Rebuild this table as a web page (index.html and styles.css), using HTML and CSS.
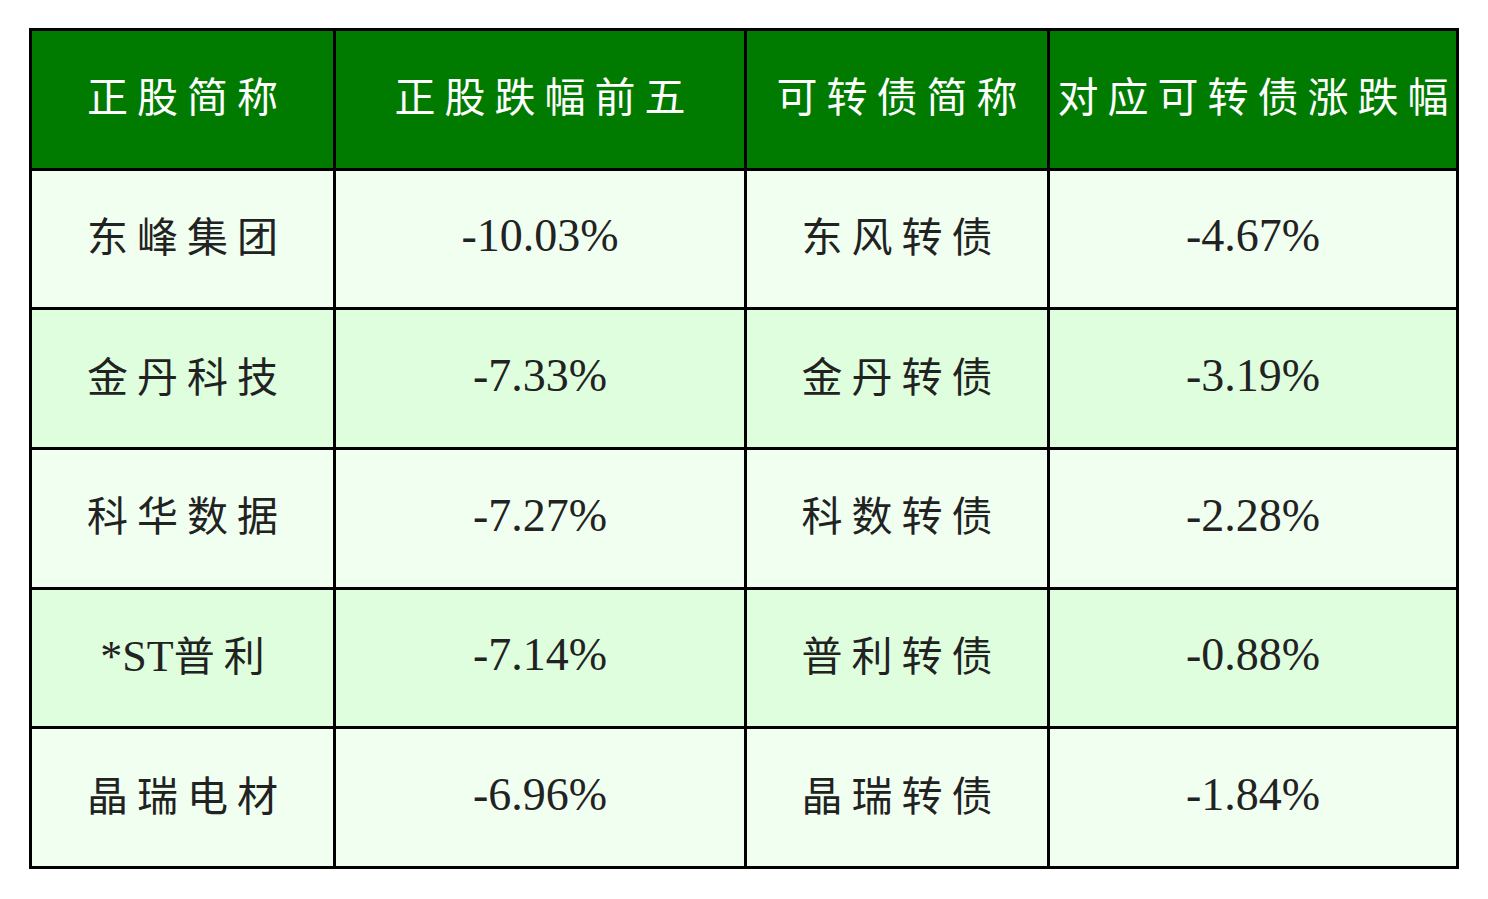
FILE: index.html
```html
<!DOCTYPE html>
<html lang="zh-CN">
<head>
<meta charset="utf-8">
<title>正股跌幅前五</title>
<link rel="stylesheet" href="styles.css">
</head>
<body>
<div class="table">
  <div class="cell head"><span class="txt">正股简称</span></div>
  <div class="cell head"><span class="txt">正股跌幅前五</span></div>
  <div class="cell head"><span class="txt">可转债简称</span></div>
  <div class="cell head"><span class="txt">对应可转债涨跌幅</span></div>

  <div class="cell odd cjk"><span class="txt">东峰集团</span></div>
  <div class="cell odd num">-10.03%</div>
  <div class="cell odd cjk"><span class="txt">东风转债</span></div>
  <div class="cell odd num">-4.67%</div>

  <div class="cell even cjk"><span class="txt">金丹科技</span></div>
  <div class="cell even num">-7.33%</div>
  <div class="cell even cjk"><span class="txt">金丹转债</span></div>
  <div class="cell even num">-3.19%</div>

  <div class="cell odd cjk"><span class="txt">科华数据</span></div>
  <div class="cell odd num">-7.27%</div>
  <div class="cell odd cjk"><span class="txt">科数转债</span></div>
  <div class="cell odd num">-2.28%</div>

  <div class="cell even cjk"><span class="txt"><span class="lat">*ST</span>普利</span></div>
  <div class="cell even num">-7.14%</div>
  <div class="cell even cjk"><span class="txt">普利转债</span></div>
  <div class="cell even num">-0.88%</div>

  <div class="cell odd cjk"><span class="txt">晶瑞电材</span></div>
  <div class="cell odd num">-6.96%</div>
  <div class="cell odd cjk"><span class="txt">晶瑞转债</span></div>
  <div class="cell odd num">-1.84%</div>
</div>
</body>
</html>
```
FILE: styles.css
```css
html, body {
  margin: 0;
  padding: 0;
  background: #ffffff;
}
body {
  padding: 28px 0 0 29px;
  font-family: "Liberation Serif", "Noto Sans CJK SC", serif;
}
.table {
  display: grid;
  grid-template-columns: 304px 411px 303px 409px;
  grid-template-rows: repeat(6, 139.67px);
  width: 1427px;
  border-left: 3px solid #000;
  border-top: 3px solid #000;
}
.cell {
  box-sizing: border-box;
  border-right: 3px solid #000;
  border-bottom: 3px solid #000;
  display: flex;
  align-items: center;
  justify-content: center;
  color: #222222;
  white-space: nowrap;
}
.head {
  background: #007b00;
  color: #ffffff;
  font-family: "Noto Sans CJK SC", sans-serif;
  font-weight: 400;
  font-size: 41px;
  padding-bottom: 11px;
}
.txt {
  letter-spacing: 9px;
  margin-right: -9px;
}
.odd {
  background: #f0fff0;
}
.even {
  background: #defede;
}
.cjk {
  font-family: "Noto Sans CJK SC", sans-serif;
  font-weight: 400;
  font-size: 41px;
  padding-bottom: 10px;
}
.lat {
  font-family: "Liberation Serif", serif;
  font-weight: 400;
  font-size: 44px;
  letter-spacing: 0;
}
.num {
  font-family: "Liberation Serif", serif;
  font-size: 46px;
  padding-bottom: 6px;
}
```
